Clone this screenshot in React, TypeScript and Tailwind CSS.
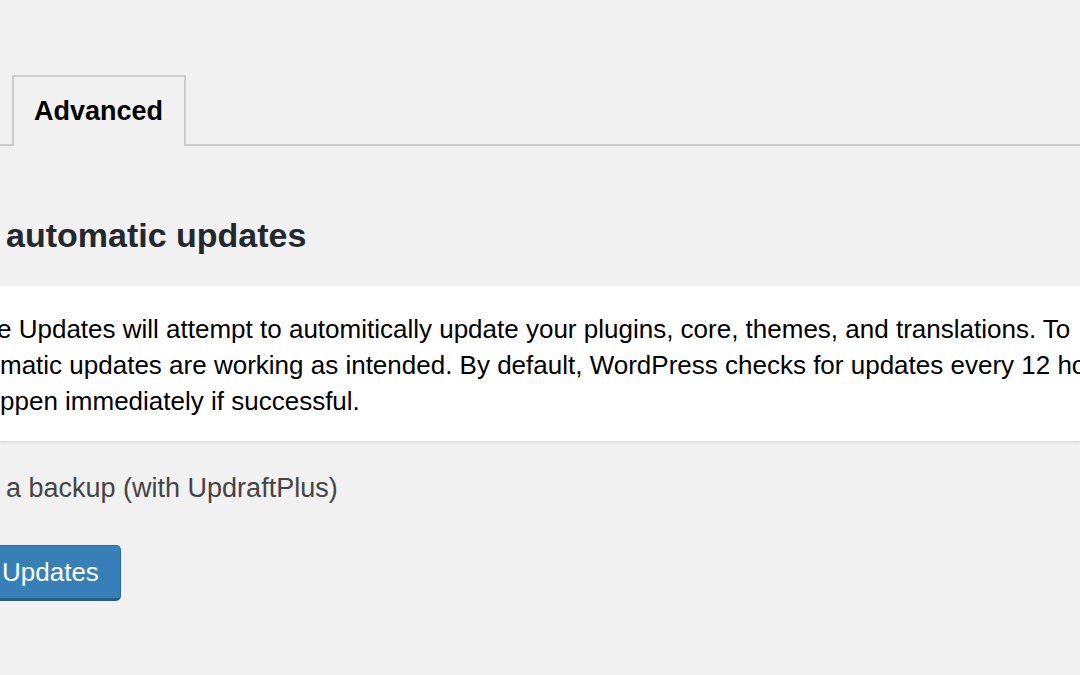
import React from "react";

export default function App() {
  return (
    <div
      className="w-[1080px] h-[675px] overflow-hidden bg-[#f1f1f1] text-[#23282d]"
      style={{ fontFamily: '"Liberation Sans", Arial, sans-serif' }}
    >
      {/* tabs */}
      <div className="pt-[76px] flex items-end border-b-2 border-[#cccccc] h-[146px]">
        <div className="w-[12px]" />
        <div className="-mb-[2px] h-[71px] w-[174px] border-2 border-b-0 border-[#cccccc] bg-[#f1f1f1] flex items-center pl-[20px]">
          <span className="text-[27px] font-bold text-black leading-none">Advanced</span>
        </div>
      </div>

      {/* heading */}
      <h2 className="mt-[71px] pl-[6px] text-[34px] leading-[36px] font-bold text-[#23282d] whitespace-nowrap">
        automatic updates
      </h2>

      {/* white notice box */}
      <div className="mt-[33px] h-[155px] bg-white shadow-[0_2px_2px_rgba(0,0,0,0.08)] pt-[25px] text-[26px] leading-[36px] text-black whitespace-nowrap">
        <div className="-ml-[3px]">e Updates will attempt to automitically update your plugins, core, themes, and translations. To</div>
        <div className="ml-0">matic updates are working as intended. By default, WordPress checks for updates every 12 hours</div>
        <div className="ml-0">ppen immediately if successful.</div>
      </div>

      {/* backup line */}
      <div className="mt-[29px] pl-[6px] text-[27px] leading-[36px] text-[#444444] whitespace-nowrap">
        a backup (with UpdraftPlus)
      </div>

      {/* button */}
      <div className="mt-[39px] flex">
        <button className="-ml-[20px] h-[56px] w-[141px] rounded-[5px] bg-[#3680b7] border border-[#2a6c9f] border-b-[3px] border-b-[#255f8c] text-white text-[26px] flex items-center pl-[21px]">
          Updates
        </button>
      </div>
    </div>
  );
}
